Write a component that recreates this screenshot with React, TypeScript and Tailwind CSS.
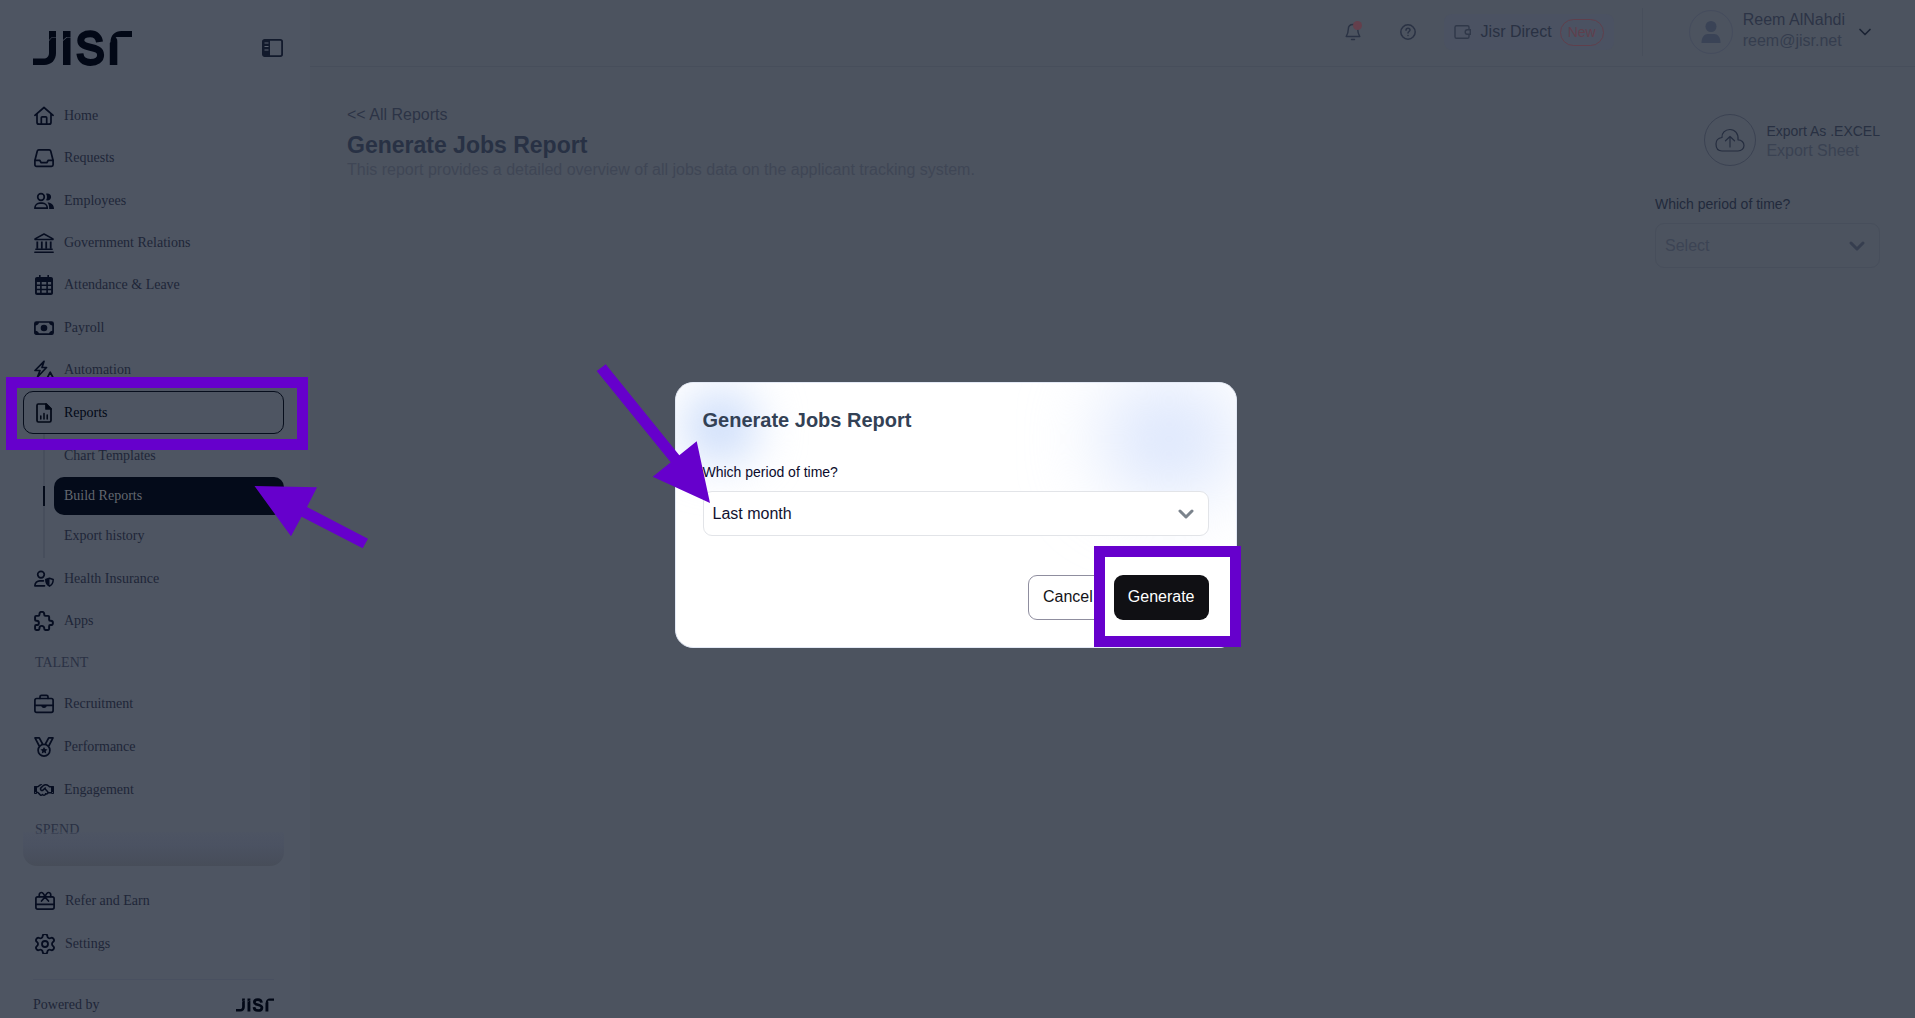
import React, { useState } from "react";
import { Settings, ChevronDown } from "lucide-react";
import { FaRegHandshake } from "react-icons/fa6";

interface NavItem {
  label: string;
  icon: React.ReactNode;
}

function Icon({ children }: { children: React.ReactNode }) {
  return (
    <svg
      viewBox="0 0 20 20"
      fill="none"
      stroke="currentColor"
      strokeWidth="1.7"
      strokeLinecap="round"
      strokeLinejoin="round"
      className="size-5 shrink-0"
      aria-hidden="true"
    >
      {children}
    </svg>
  );
}

function Logo({ className }: { className: string }) {
  return (
    <svg viewBox="0 0 99 36" className={className} role="img" aria-label="Jisr">
      <g fill="currentColor">
        <path d="M16 1h7v6h-4l-3 3z" />
        <path d="M19 7.500h4V23c0 7-4.500 12-12 12H0v-6.500h10.500c3.500 0 5.500-2 5.500-5.500V11z" />
        <path d="M30 1h7.500v6h-4L30 10z" />
        <path d="M34 7.500h3.500V35H30V11z" />
        <path d="M99 1v6H83.500l-6 5.500C77.500 5 82 1 88.500 1z" />
        <path d="M81.500 7.500c2 0 2.800 1.500 2.800 4V35h-7.500V13z" />
      </g>
      <path
        d="M66.500 12c-.6-5-3.800-8.200-9.300-8.200-5.600 0-9.400 2.600-9.400 6.800 0 9.400 19.800 3.800 19.800 14.400 0 4.600-4 7.400-10.200 7.400-6.300 0-10-3.200-10.500-8.900"
        fill="none"
        stroke="currentColor"
        strokeWidth="7"
      />
    </svg>
  );
}

const mainItems: NavItem[] = [
  {
    label: "Home",
    icon: (
      <Icon>
        <path d="M.9 9.300 10 1.500l9.100 7.800M3 7.800v8.400c0 1.200.8 2 2 2h10c1.200 0 2-.8 2-2V7.800" />
        <path d="M7.300 18v-6.200c0-.6.400-1 1-1h3.400c.6 0 1 .4 1 1V18" />
      </Icon>
    ),
  },
  {
    label: "Requests",
    icon: (
      <Icon>
        <path d="M4.800 1.800h10.400c.7 0 1.300.5 1.500 1.200l2.400 9.500v4.300c0 .9-.7 1.600-1.600 1.600h-15c-.9 0-1.600-.7-1.600-1.600v-4.300L3.300 3c.2-.7.8-1.200 1.500-1.200z" />
        <path d="M1 12.300h4.700l1.500 2.400h5.600l1.500-2.400H19" />
      </Icon>
    ),
  },
  {
    label: "Employees",
    icon: (
      <Icon>
        <circle cx="7" cy="6" r="3.300" />
        <path d="M.9 17.200c0-3 2.400-5 5-5h2.400c2.600 0 5 2 5 5z" />
        <path
          d="M12 2.700c3.100-.7 5.100 1 5.100 3.300S15.100 10 12 9.300c1.300-2 1.300-4.600 0-6.600z"
          fill="currentColor"
          stroke="none"
        />
        <path
          d="M13.500 11.400c3.700 0 6.500 2.200 6.500 6.600h-4.800c0-3-.4-4.900-1.700-6.600z"
          fill="currentColor"
          stroke="none"
        />
      </Icon>
    ),
  },
  {
    label: "Government Relations",
    icon: (
      <Icon>
        <path d="M1 5.900 10 1l9 4.900v.6H1z" strokeWidth="1.500" />
        <path
          d="M3.300 8.500v7.300M7.800 8.500v7.300M12.200 8.500v7.300M16.700 8.500v7.300"
          strokeWidth="1.800"
          strokeLinecap="butt"
        />
        <path d="M1.800 16.200h16.400M.8 19.200h18.400" strokeWidth="1.400" />
      </Icon>
    ),
  },
  {
    label: "Attendance & Leave",
    icon: (
      <Icon>
        <path
          fillRule="evenodd"
          fill="currentColor"
          stroke="none"
          d="M5 0h1.600v2H13.400V0H15v2h2c1.100 0 2 .9 2 2v14c0 1.100-.9 2-2 2H3c-1.100 0-2-.9-2-2V4c0-1.100.9-2 2-2h2zM2.900 7v2.600h3.200V7zm4.800 0v2.600h4.600V7zm6.200 0v2.600h3.200V7zM2.900 11v2.800h3.200V11zm4.800 0v2.800h4.600V11zm6.200 0v2.800h3.200V11zM2.900 15.200v2.600h3.200v-2.600zm4.800 0v2.600h4.600v-2.600zm6.200 0v2.600h3.200v-2.600z"
        />
      </Icon>
    ),
  },
  {
    label: "Payroll",
    icon: (
      <Icon>
        <rect x=".9" y="4" width="18.200" height="12.200" rx="1.500" />
        <circle cx="10" cy="10" r="3.300" fill="currentColor" stroke="none" />
        <path
          d="M1 4h4c0 2-1.500 3.500-4 3.500zM19 4h-4c0 2 1.500 3.500 4 3.500zM1 16.200h4c0-2-1.500-3.500-4-3.500zM19 16.200h-4c0-2 1.500-3.500 4-3.500z"
          fill="currentColor"
          stroke="none"
        />
      </Icon>
    ),
  },
  {
    label: "Automation",
    icon: (
      <Icon>
        <path d="M10 1.300 1 10.500h5L3.500 17l9-9.500H8z" />
        <path d="M16.200 12.200 13 18.500h6.500z" />
      </Icon>
    ),
  },
];

const talentItems: NavItem[] = [
  {
    label: "Recruitment",
    icon: (
      <Icon>
        <rect x=".9" y="4.500" width="18.200" height="13.800" rx="1.800" />
        <path d="M6 4.300V2.800c0-.9.600-1.500 1.500-1.500h5c.9 0 1.500.6 1.500 1.500v1.500M1 11.300h18" />
        <path d="M7.300 11.300h5.400c0 1.700-1 2.600-2.700 2.600s-2.700-.9-2.700-2.600z" fill="currentColor" stroke="none" />
      </Icon>
    ),
  },
  {
    label: "Performance",
    icon: (
      <Icon>
        <circle cx="10" cy="13.200" r="5.900" />
        <path d="m5 8.500-4-7.600h4.300L8.300 6.500M15 8.500l4-7.600h-4.300l-3 5.600" />
        <path
          d="m10 9.900 1.100 2.200 2.400.3-1.700 1.700.4 2.400-2.200-1.200-2.200 1.200.4-2.400-1.700-1.700 2.400-.3z"
          fill="currentColor"
          stroke="none"
        />
      </Icon>
    ),
  },
  {
    label: "Engagement",
    icon: <FaRegHandshake className="size-5 shrink-0" />,
  },
];

const healthItems: NavItem[] = [
  {
    label: "Health Insurance",
    icon: (
      <Icon>
        <circle cx="7" cy="5.600" r="3.300" />
        <path d="M10.500 16.800H.9c0-3.200 2.300-5 5-5h3.500" />
        <path d="m15.500 9.200 3.700 1.300c0 3.200-1.200 5.400-3.700 6.700-2.500-1.300-3.700-3.500-3.700-6.700z" strokeWidth="1.500" />
        <path d="m15.500 9.200-3.700 1.300c0 3.200 1.200 5.400 3.700 6.700z" fill="currentColor" stroke="none" />
      </Icon>
    ),
  },
  {
    label: "Apps",
    icon: (
      <svg
        viewBox="3 2 18.500 18.500"
        fill="none"
        stroke="currentColor"
        strokeWidth="1.800"
        strokeLinejoin="round"
        className="size-5 shrink-0"
        aria-hidden="true"
      >
        <path d="M5 6.500h2a1 1 0 0 0 1-1V5a2 2 0 0 1 4.500 0v.500a1 1 0 0 0 1 1h2.500a1 1 0 0 1 1 1V10a1 1 0 0 0 1 1h.500a2 2 0 0 1 0 4h-.500a1 1 0 0 0-1 1v2.500a1 1 0 0 1-1 1h-2.500a1 1 0 0 1-1-1V18a2 2 0 0 0-4.500 0v.500a1 1 0 0 1-1 1H5a1 1 0 0 1-1-1V16a1 1 0 0 1 1-1h.500a2 2 0 0 0 0-4H5a1 1 0 0 1-1-1V7.500a1 1 0 0 1 1-1z" />
      </svg>
    ),
  },
];

const footerItems: NavItem[] = [
  {
    label: "Refer and Earn",
    icon: (
      <Icon>
        <rect x=".9" y="5.800" width="18.200" height="12.300" rx="1.800" />
        <path d="M1 13.300h18M6.500 10 10 6l3.500 4M10 6C9 3 7.800 1.500 6.200 1.500S4 3.200 4.300 5.500M10 6c1-3 2.200-4.500 3.800-4.500S16 3.200 15.700 5.500" />
      </Icon>
    ),
  },
  {
    label: "Settings",
    icon: (
      <svg viewBox="2 2 20 20" className="size-5 shrink-0" aria-hidden="true">
        <Settings size={24} strokeWidth={1.8} />
      </svg>
    ),
  },
];

function NavLink({ item }: { item: NavItem }) {
  return (
    <li className="flex">
      <a href="#" className="flex flex-1 items-center gap-2.5 px-[11px] text-[#1e2638]">
        <span className="text-[#060d20]">{item.icon}</span>
        {item.label}
      </a>
    </li>
  );
}

function Sidebar() {
  return (
    <aside className="flex w-[310px] shrink-0 flex-col bg-[#4e5562] pr-[26px] pl-[23px] font-['Liberation_Serif',serif] text-sm text-[#1e2638]">
      <div className="flex h-[95px] items-center justify-between pr-px pl-2.5">
        <Logo className="h-9 w-[99px] text-[#020816]" />
        <button aria-label="Collapse sidebar" className="text-[#121a2c]">
          <svg viewBox="0 0 21 18" className="h-[18px] w-[21px]" fill="none">
            <rect x=".9" y=".9" width="19.200" height="16.200" rx="1.800" stroke="currentColor" strokeWidth="1.800" />
            <path d="M1 1h7v16H1z" fill="currentColor" />
            <path d="M2.500 4h4M2.500 7.500h4M2.500 11h4" stroke="#5c6370" strokeWidth="1" />
          </svg>
        </button>
      </div>

      <nav>
        <ul className="grid h-[296px] auto-rows-fr">
          {mainItems.map((item) => (
            <NavLink key={item.label} item={item} />
          ))}
        </ul>

        <div className="relative z-10">
          <a
            href="#"
            className="flex h-[43px] items-center gap-2.5 rounded-[10px] border border-[#060d1c] px-2.5 text-[#020816]"
          >
            <Icon>
              <path d="M4.300 1h7.900l4.800 4.800v11.700c0 .9-.6 1.500-1.500 1.500h-11c-.9 0-1.500-.6-1.500-1.500v-15c0-.9.400-1.500 1.300-1.500z" />
              <path d="M12 1v5h5z" fill="currentColor" />
              <path d="M6.800 13v3M10 10.500V16M13.200 12v4" strokeWidth="1.500" />
            </Icon>
            Reports
          </a>
          <div className="pointer-events-none absolute -top-[14px] -right-6 -bottom-4 -left-[17px] border-[11px] border-[#6600cc]" />
        </div>

        <ul className="relative ml-5 flex flex-col gap-0.5 border-l-2 border-[#474e5c] py-[3px] pl-[9px]">
          <li>
            <a href="#" className="flex h-[38px] items-center px-2.5">
              Chart Templates
            </a>
          </li>
          <li className="relative">
            <a
              href="#"
              className="flex h-[38px] items-center rounded-[10px] bg-[#040b1a] px-2.5 text-[#62676f]"
            >
              Build Reports
            </a>
            <span className="absolute top-[9px] -left-[11px] h-5 w-0.5 bg-[#040b1a]" />
            <svg
              viewBox="254 485 116 64"
              className="pointer-events-none absolute top-2 left-[200px] z-10 h-16 w-[116px]"
              aria-hidden="true"
            >
              <path
                d="M254.500 486 317 487.300 307 507 368 538.700 362.700 548.300 301.500 516.700 291 536.300z"
                fill="#6600cc"
              />
            </svg>
          </li>
          <li>
            <a href="#" className="flex h-[38px] items-center px-2.5">
              Export history
            </a>
          </li>
        </ul>

        <ul className="grid h-[84px] auto-rows-fr">
          {healthItems.map((item) => (
            <NavLink key={item.label} item={item} />
          ))}
        </ul>
        <h2 className="flex h-[41px] items-center px-3 text-[#2a3144]">TALENT</h2>
        <ul className="grid h-32 auto-rows-fr">
          {talentItems.map((item) => (
            <NavLink key={item.label} item={item} />
          ))}
        </ul>
        <h2 className="px-3 pt-[9px] text-[#2a3144]">SPEND</h2>
      </nav>

      <div className="relative -mt-2 h-[34px] shrink-0 rounded-b-[14px] bg-linear-to-b from-[#4c5364]/40 via-[#4b5262] via-40% to-[#474d59]" />

      <ul className="mt-[13px] grid h-[86px] shrink-0 auto-rows-fr pl-px">
        {footerItems.map((item) => (
          <NavLink key={item.label} item={item} />
        ))}
      </ul>

      <div className="mx-2.5 mt-3.5 flex h-[39px] items-center justify-between border-t border-[#495060] pt-3">
        Powered by
        <Logo className="h-3.5 w-[38px] text-[#020816]" />
      </div>
    </aside>
  );
}

function Header() {
  return (
    <header className="flex h-[67px] items-center justify-end border-b border-[#474e5b] pr-10 pb-0.5 text-[#293143]">
      <button aria-label="Notifications" className="relative text-[#2a3244]">
        <svg viewBox="0 0 16 18" className="h-[18px] w-4" fill="none" stroke="currentColor" strokeWidth="1.400" strokeLinecap="round" strokeLinejoin="round">
          <path d="M8 1.500c-3 0-4.700 2.200-4.700 4.800 0 3.400-.8 5-2.100 7.200h13.600c-1.300-2.200-2.100-3.800-2.100-7.200C12.700 3.700 11 1.500 8 1.500zM6.500 16.500h3" />
        </svg>
        <span className="absolute -top-0.5 left-2 size-[9px] rounded-full bg-[#643f4c]" />
      </button>
      <button aria-label="Help" className="ml-[39px] text-[#2a3244]">
        <svg viewBox="0 0 16 16" className="size-4" fill="none" stroke="currentColor" strokeWidth="1.500" strokeLinecap="round">
          <circle cx="8" cy="8" r="7.200" />
          <path d="M6 6.300C6 5 6.900 4.300 8 4.300s2 .7 2 1.800C10 7.500 8 7.500 8 9M8 11.400v.2" />
        </svg>
      </button>
      <button className="ml-7 flex h-9 items-center gap-2 rounded-lg bg-[#4b5262] px-[10px] text-base">
        <svg viewBox="0 0 17 16" className="mr-0.5 h-4 w-[17px] text-[#303849]" fill="none" stroke="currentColor" strokeWidth="1.400">
          <path d="M15 5V3.300c0-1-.7-1.600-1.600-1.600H2.600C1.700 1.700 1 2.300 1 3.300v9.400c0 .9.700 1.600 1.600 1.600h10.800c.9 0 1.600-.7 1.600-1.600V11" />
          <path d="M16.300 5.800h-3c-1.200 0-2.100 1-2.100 2.200s.9 2.200 2.100 2.200h3z" />
        </svg>
        Jisr Direct
        <span className="flex h-[27px] items-center rounded-full border border-[#5f3f4c] px-[7px] text-sm text-[#5f3f4c]">
          New
        </span>
      </button>
      <div className="ml-7 h-12 w-px bg-[#474e5b]" />
      <button className="ml-[46px] flex items-center text-left text-base">
        <span className="flex size-11 items-center justify-center rounded-full border border-[#454c5d] text-[#3a4356]">
          <svg viewBox="0 0 20 22" className="h-[22px] w-5" fill="currentColor">
            <circle cx="10" cy="5.500" r="5.500" />
            <path d="M.5 22C.5 16 3.500 13 7 13h6c3.500 0 6.500 3 6.500 9z" />
          </svg>
        </span>
        <span className="ml-2.5 flex flex-col pb-1 leading-[21px] text-[#2c3446]">
          <span>Reem AlNahdi</span>
          <span className="text-[#353d4e]">reem@jisr.net</span>
        </span>
        <ChevronDown className="ml-2.5 size-5 text-[#1b2334]" strokeWidth={2} />
      </button>
    </header>
  );
}

function ReportPage() {
  return (
    <main className="flex justify-between pt-[37px] pr-[35px] pl-[37px]">
      <div>
        <a href="#" className="block text-base leading-[22px] text-[#2c3446]">
          &lt;&lt; All Reports
        </a>
        <h1 className="mt-[3px] text-[23px] leading-8 font-bold text-[#283144]">Generate Jobs Report</h1>
        <p className="text-base leading-[18px] text-[#3f4655]">
          This report provides a detailed overview of all jobs data on the applicant tracking system.
        </p>
      </div>
      <div className="flex w-[225px] flex-col pt-2.5">
        <button className="flex items-center gap-2.5 self-end text-left">
          <span className="flex size-[52px] items-center justify-center rounded-full border border-[#3b4252] text-[#252d3f]">
            <svg viewBox="0 0 30 24" className="h-6 w-[30px]" fill="none" stroke="currentColor" strokeWidth="1.200" strokeLinecap="round" strokeLinejoin="round">
              <path d="M7 23h16c3.500 0 6-2.500 6-5.500 0-3.200-2.500-5.700-6-5.700.7-6-3-10.300-8-10.300S6.500 5.300 7 9.500c-3.500.5-6 3-6 6.500C1 20.500 3.500 23 7 23z" />
              <path d="M15 19V9M10.500 12.800 15 8.500l4.500 4.300" />
            </svg>
          </span>
          <span className="flex flex-col pt-0.5">
            <span className="text-sm leading-5 text-[#283042]">Export As .EXCEL</span>
            <span className="text-base leading-5 text-[#3a4252]">Export Sheet</span>
          </span>
        </button>
        <label htmlFor="page-period" className="mt-7 text-sm leading-5 text-[#222a3c]">
          Which period of time?
        </label>
        <div className="relative mt-[9px]">
          <select
            id="page-period"
            className="h-[45px] w-full appearance-none rounded-[9px] border border-[#474e5b] px-[9px] text-base text-[#3c4454]"
          >
            <option>Select</option>
          </select>
          <ChevronDown
            className="pointer-events-none absolute top-[11px] right-[11px] size-6 text-[#363e4f]"
            strokeWidth={3}
          />
        </div>
      </div>
    </main>
  );
}

function GenerateDialog() {
  const [period, setPeriod] = useState("Last month");

  return (
    <div className="fixed inset-0 z-20 flex items-center justify-center pt-3 pr-1">
      <div
        role="dialog"
        aria-labelledby="dialog-title"
        className="relative w-[562px] rounded-[18px] border border-[#e3e9f5] bg-white px-[27px] pt-[22px] pb-[27px]"
      >
        <div className="pointer-events-none absolute inset-0 overflow-hidden rounded-[18px]">
          <div className="absolute top-2 left-2 size-[72px] rounded-full bg-[#c8dafa] blur-xl" />
          <div className="absolute top-1 right-0.5 h-[104px] w-[130px] rounded-full bg-[#d6e2fc] blur-2xl" />
        </div>
        <div className="relative">
          <h2 id="dialog-title" className="text-xl leading-[30px] font-bold text-[#334155]">
            Generate Jobs Report
          </h2>
          <label htmlFor="dialog-period" className="mt-[27px] block text-sm leading-5 text-[#0b0b2b]">
            Which period of time?
          </label>
          <div className="relative mt-[9px]">
            <select
              id="dialog-period"
              value={period}
              onChange={(event) => {
                setPeriod(event.target.value);
              }}
              className="h-[45px] w-full appearance-none rounded-[9px] border border-[#e2e4e8] bg-white px-[9px] text-base text-[#12122f]"
            >
              <option>Last month</option>
              <option>This month</option>
            </select>
            <ChevronDown
              className="pointer-events-none absolute top-[11px] right-[11px] size-6 text-[#7b838c]"
              strokeWidth={3}
            />
          </div>
          <div className="mt-[39px] flex justify-end gap-1.5 text-base">
            <button className="h-[45px] rounded-[9px] border border-[#8f8e9f] bg-white px-[14px] pb-0.5 text-[#141418]">
              Cancel
            </button>
            <div className="relative">
              <div className="pointer-events-none absolute -top-[29px] -right-8 -bottom-[27px] -left-5 border-[11px] border-[#6600cc] bg-white" />
              <button className="relative h-[45px] rounded-[9px] bg-[#101014] px-[14px] pb-0.5 text-white">
                Generate
              </button>
            </div>
          </div>
        </div>
        <svg
          viewBox="596 364 116 140"
          className="pointer-events-none absolute -top-[19px] -left-20 h-[140px] w-[116px]"
          aria-hidden="true"
        >
          <path
            d="M596.700 371 605.700 364.300 679.300 455.300 696.700 441.300 710 503 652.700 476.700 670.700 462.300z"
            fill="#6600cc"
          />
        </svg>
      </div>
    </div>
  );
}

function App() {
  return (
    <div className="flex min-h-screen bg-[#4c535f] font-['Liberation_Sans',Arial,sans-serif]">
      <Sidebar />
      <div className="flex-1">
        <Header />
        <ReportPage />
      </div>
      <GenerateDialog />
    </div>
  );
}

export default App;
